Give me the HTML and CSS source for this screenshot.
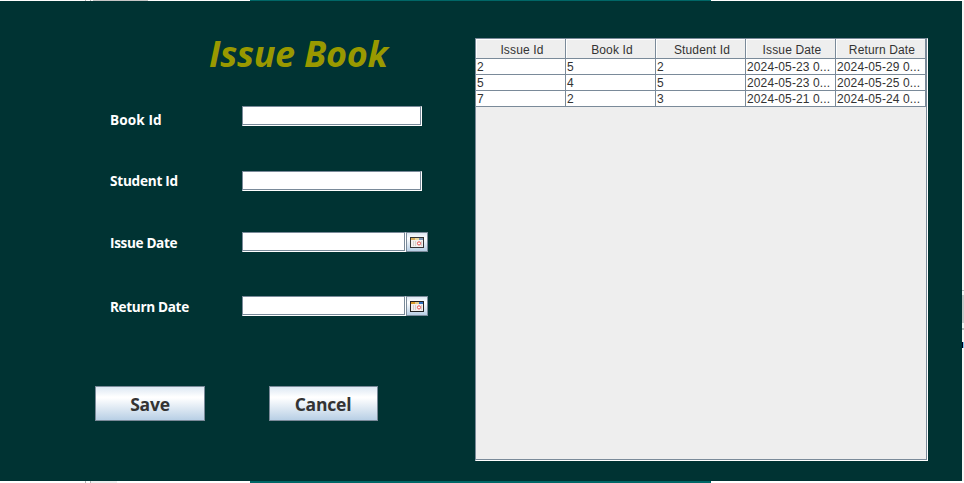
FILE: index.html
```html
<!DOCTYPE html>
<html lang="en">
<head>
<meta charset="utf-8">
<title>Issue Book</title>
<link rel="stylesheet" href="styles.css">
</head>
<body>
<div class="strip strip-top"><i class="ticks"></i><i class="tab"></i><i class="teal"></i></div>
<div class="middle">
<main class="window">
  <form class="form">
    <h1><span>Issue Book</span></h1>
    <div class="row book"><label class="l-book" for="book">Book Id</label><input class="field" id="book" type="text"></div>
    <div class="row student"><label class="l-student" for="student">Student Id</label><input class="field" id="student" type="text"></div>
    <div class="row issue"><label class="l-issue" for="issue">Issue Date</label><input class="field date" id="issue" type="text"><button class="pick" type="button" aria-label="Choose issue date">
      <svg width="14" height="11" viewBox="0 0 14 11" shape-rendering="crispEdges"><path fill="#333" d="M0 0h14v11H0z"/><path fill="#f3f0ee" d="M1 1h12v9H1z"/><path fill="#d9ae5a" d="M1 1h4v2H1z"/><path fill="#e9d9a5" d="M5 1h4v2H5z"/><path fill="#7d97b5" d="M9 1h4v2H9z"/><path stroke="#d6d1cf" d="M3.5 4v5M5.5 4v5M11.5 4v5"/><circle cx="9" cy="6.4" r="1.6" fill="#fff" stroke="#e8504b" shape-rendering="auto"/></svg></button></div>
    <div class="row return"><label class="l-return" for="return">Return Date</label><input class="field date" id="return" type="text"><button class="pick" type="button" aria-label="Choose return date">
      <svg width="14" height="11" viewBox="0 0 14 11" shape-rendering="crispEdges"><path fill="#222" d="M0 0h14v11H0z"/><path fill="#f3f0ee" d="M1 1h12v9H1z"/><path fill="#d99a26" d="M1 1h4v2H1z"/><path fill="#e9cf8a" d="M5 1h4v2H5z"/><path fill="#2f6fc0" d="M9 1h4v2H9z"/><path stroke="#d6d1cf" d="M3.5 4v5M5.5 4v5M11.5 4v5"/><circle cx="9" cy="6.4" r="1.6" fill="#fff" stroke="#e8504b" shape-rendering="auto"/></svg></button></div>
    <div class="actions"><button class="btn save" type="button"><span>Save</span></button><button class="btn cancel" type="button"><span>Cancel</span></button></div>
  </form>
  <section class="pane">
    <table>
      <thead><tr><th>Issue Id</th><th>Book Id</th><th>Student Id</th><th>Issue Date</th><th>Return Date</th></tr></thead>
      <tbody>
        <tr><td>2</td><td>5</td><td>2</td><td>2024-05-23 0...</td><td>2024-05-29 0...</td></tr>
        <tr><td>5</td><td>4</td><td>5</td><td>2024-05-23 0...</td><td>2024-05-25 0...</td></tr>
        <tr><td>7</td><td>2</td><td>3</td><td>2024-05-21 0...</td><td>2024-05-24 0...</td></tr>
      </tbody>
    </table>
  </section>
</main>
<aside class="edge"><i class="line"></i><i class="thumb"></i><i class="line low"></i><i class="mark"></i></aside>
</div>
<div class="strip strip-bottom"><i class="ticks"></i><i class="tab"></i><i class="teal"></i></div>
</body>
</html>
```
FILE: styles.css
```css
* { box-sizing: border-box; }
body { margin: 0; width: 964px; height: 483px; overflow: hidden; background: #fff; font-family: "Open Sans", sans-serif; }
.strip { display: flex; background: #fff; }
.strip-top { height: 1px; }
.strip-bottom { height: 2px; }
.ticks { width: 6px; margin-left: 85px; border: solid #b5b5b5; border-width: 0 1px; }
.tab { width: 55px; margin-left: 2px; background: #c6c6c6; }
.strip-bottom .tab { width: 26px; margin-left: 0; background: #eee; }
.teal { width: 461px; margin-left: 102px; background: #006767; }
.strip-bottom .teal { margin-left: 133px; }
.middle { display: flex; height: 480px; }
.window { display: flex; width: 962px; background: #003333; }
.edge { width: 2px; padding-top: 289px; background: #f5f5f5; }
.edge i { display: block; }
.line { height: 1px; background: #bbb; }
.thumb { height: 28px; margin-top: 4px; background: #ccc; }
.low { margin-top: 5px; height: 2px; }
.mark { height: 6px; margin-top: 12px; background: linear-gradient(90deg, #002 1px, #79c4ef 1px); }
.form { width: 475px; }
h1 { margin: 0; padding: 27px 0 0 209px; height: 105px; font-size: 36px; line-height: 51px; font-weight: 700; font-style: italic; color: #999900; white-space: nowrap; letter-spacing: -0.3px; }
.row { display: flex; align-items: flex-start; padding-left: 110px; }
.book { height: 65px; }
.student { height: 61px; }
.issue { height: 64px; }
.return { height: 90px; }
label { width: 132px; font-size: 13.6px; line-height: 20px; font-weight: 700; color: #fff; white-space: nowrap; letter-spacing: -0.35px; }
.l-book { margin-top: 4px; letter-spacing: 0.1px; }
.l-student { letter-spacing: -0.25px; }
.issue label, .return label { margin-top: 1px; }
.field { width: 180px; height: 20px; margin: 0; padding: 0 3px; border: 1px solid; border-color: #7a8a99 #fff #fff #7a8a99; border-radius: 0; outline: 0; background: #fff; box-shadow: inset -1px -1px #7a8a99; }
.date { width: 164px; }
.pick { display: flex; align-items: center; justify-content: center; width: 22px; height: 20px; padding: 1px 0 0; border: 1px solid #7a8a99; background: linear-gradient(#dde8f3, #fff 30%, #b8cfe5); }
.actions { display: flex; gap: 64px; padding-left: 95px; }
.btn { width: 110px; height: 35px; padding: 1px 0 0; border: 1px solid #7a8a99; border-radius: 0; background: linear-gradient(#dde8f3, #fff 30%, #fff 33%, #b8cfe5); color: #333; font: 700 17.5px/32px "Open Sans", sans-serif; letter-spacing: -0.2px; }
.cancel { width: 109px; padding-right: 1px; }
.pane { width: 453px; height: 423px; margin-top: 37px; border: 1px solid; border-color: #7a8a99 #fff #fff #7a8a99; background: #eee; box-shadow: inset -1px -1px #7a8a99; }
table { table-layout: fixed; width: 450px; border-spacing: 0; font: 12px/14px "Liberation Sans", Arial, sans-serif; color: #333; }
th, td { padding: 0; border: solid #7a8a99; border-width: 0 1px 1px 0; white-space: nowrap; }
th { height: 20px; padding: 3px 0 0 3px; font-weight: 400; letter-spacing: 0.15px; background: #eee; box-shadow: inset 1px 1px #fff; }
td { height: 16px; padding: 1px 0 0 1px; text-align: left; letter-spacing: 0.12px; background: #fff; }
```
